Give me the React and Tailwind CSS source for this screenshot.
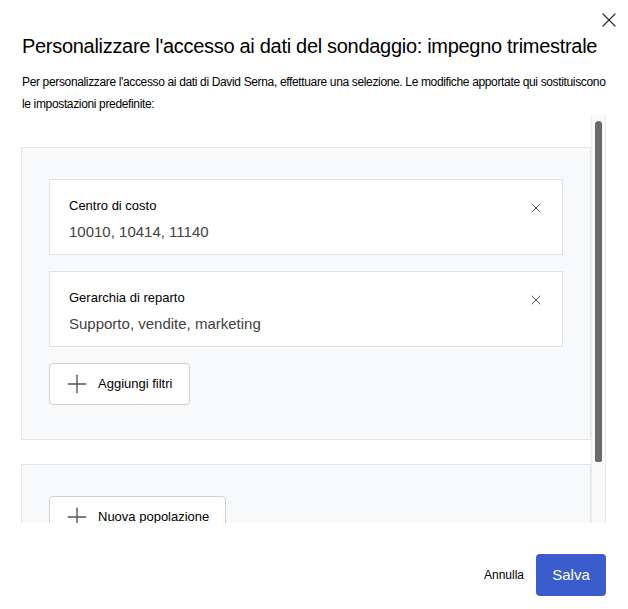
import { X, Plus } from "lucide-react";

const filters = [
  { label: "Centro di costo", value: "10010, 10414, 11140" },
  { label: "Gerarchia di reparto", value: "Supporto, vendite, marketing" },
];

function FilterCard({ label, value }) {
  return (
    <div className="flex items-start justify-between border border-[#e1e1e1] bg-white pl-[19px] pr-[18px] pt-[17px] pb-[12px]">
      <div>
        <div className="text-[13px] leading-[18px] text-black">{label}</div>
        <div className="mt-[7px] text-[15px] leading-[20px] text-[#424242]">{value}</div>
      </div>
      <X className="mt-[3px] h-[16px] w-[16px] text-[#555]" strokeWidth={1.5} />
    </div>
  );
}

function AddButton({ children, width }) {
  return (
    <button
      className={`flex h-[42px] items-center gap-[6px] rounded-[4px] border border-[#d1d1d1] bg-white pl-[12px] text-[13px] text-black ${width}`}
    >
      <Plus className="h-[30px] w-[30px] text-[#555]" strokeWidth={1.1} />
      {children}
    </button>
  );
}

export default function App() {
  return (
    <div
      className="relative h-[609px] w-[628px] bg-white"
      style={{ fontFamily: '"Liberation Sans", Arial, sans-serif' }}
    >
      <button className="absolute right-[7px] top-[8px] text-[#333]">
        <X className="h-[24px] w-[24px]" strokeWidth={1.3} />
      </button>

      <div className="pl-[22px] pr-[22px] pt-[33px]">
        <h1 className="text-[20px] leading-[26px] tracking-[-0.3px] text-black">
          Personalizzare l'accesso ai dati del sondaggio: impegno trimestrale
        </h1>
        <p className="mt-[12px] text-[12px] leading-[22px] tracking-[-0.35px] text-black">
          Per personalizzare l'accesso ai dati di David Serna, effettuare una selezione. Le modifiche apportate qui sostituiscono le impostazioni predefinite:
        </p>
      </div>

      <div className="ml-[21px] mr-[22px] flex h-[408px]">
        <div className="flex-1 overflow-hidden pt-[32px]">
          <div className="border border-[#e6e6e6] bg-[#f8f9fa] px-[27px] pt-[31px] pb-[34px]">
            <div className="flex flex-col gap-[16px]">
              {filters.map((f) => (
                <FilterCard key={f.label} {...f} />
              ))}
            </div>
            <div className="mt-[16px]">
              <AddButton width="w-[141px]">Aggiungi filtri</AddButton>
            </div>
          </div>
          <div className="mt-[24px] h-[120px] border border-[#e6e6e6] bg-[#f8f9fa] px-[27px] pt-[31px]">
            <AddButton width="w-[177px]">Nuova popolazione</AddButton>
          </div>
        </div>
        <div className="w-[15px] border-x border-[#ededed] bg-[#fafafa] px-[3px] pt-[6px]">
          <div className="h-[341px] rounded-t-[4px] rounded-b-[2px] bg-[#6b6b6b]" />
        </div>
      </div>

      <div className="flex items-center justify-end gap-[12px] pr-[22px] pt-[31px]">
        <button className="text-[12px] text-black">Annulla</button>
        <button className="h-[42px] w-[70px] rounded-[4px] bg-[#3a5ccc] text-[15px] text-white">
          Salva
        </button>
      </div>
    </div>
  );
}
